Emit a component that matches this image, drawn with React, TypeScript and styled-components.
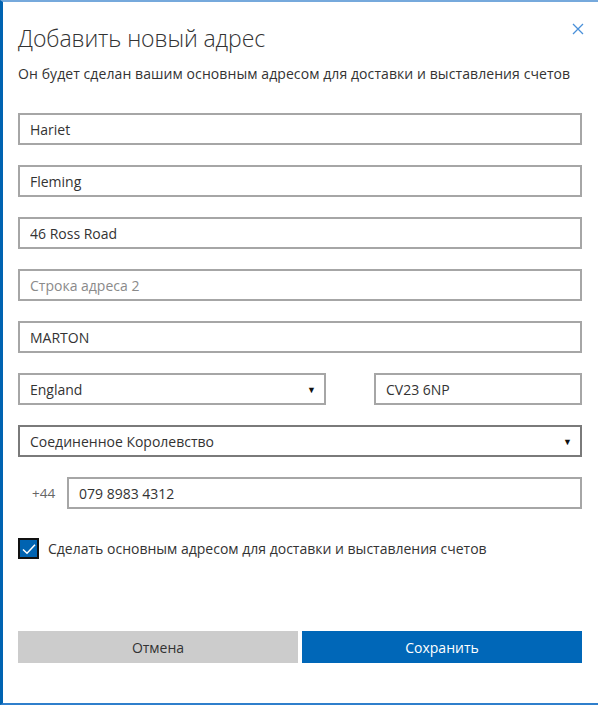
import styled, { createGlobalStyle } from "styled-components";

const Global = createGlobalStyle`
    html, body {
        margin: 0;
        padding: 0;
        background: #fff;
    }
    body {
        font-family: "Open Sans", "Noto Sans", sans-serif;
        color: #333;
    }
`

const fields = [
    { value: "Hariet" },
    { value: "Fleming" },
    { value: "46 Ross Road" },
    { value: "", placeholder: "Строка адреса 2" },
    { value: "MARTON" },
]

export default function App() {
    return <>
        <Global />
        <Dialog>
            <Header>
                <Title>Добавить новый адрес</Title>
                <Close aria-label="close">
                    <svg width="12" height="12" viewBox="0 0 12 12">
                        <path d="M1 1 L11 11 M11 1 L1 11" stroke="#4a90d9" strokeWidth="1.3" fill="none" />
                    </svg>
                </Close>
            </Header>
            <Subtitle>Он будет сделан вашим основным адресом для доставки и выставления счетов</Subtitle>

            <Form>
                {fields.map((f, idx) => <Field key={idx}>
                    <Input defaultValue={f.value} placeholder={f.placeholder} />
                </Field>)}

                <Row>
                    <Select $width="308px">
                        <span>England</span>
                        <Arrow>▼</Arrow>
                    </Select>
                    <Input $width="208px" defaultValue="CV23 6NP" />
                </Row>

                <Select $dark>
                    <span>Соединенное Королевство</span>
                    <Arrow>▼</Arrow>
                </Select>

                <PhoneRow>
                    <Prefix>+44</Prefix>
                    <Input defaultValue="079 8983 4312" />
                </PhoneRow>

                <CheckRow>
                    <Check>
                        <svg width="16" height="16" viewBox="0 0 16 16">
                            <path d="M2 8.5 L6 12.2 L14 3.8" stroke="#fff" strokeWidth="1.5" fill="none" />
                        </svg>
                    </Check>
                    <span>Сделать основным адресом для доставки и выставления счетов</span>
                </CheckRow>
            </Form>

            <Actions>
                <Button>Отмена</Button>
                <Button $primary>Сохранить</Button>
            </Actions>
        </Dialog>
    </>
}

const Dialog = styled.div`
    box-sizing: border-box;
    height: 705px;
    border-left: 3px solid #0063b1;
    border-top: 2px solid #76a9dc;
    border-bottom: 2px solid #2f7fcc;
    padding: 0 16px 0 15px;
    display: flex;
    flex-direction: column;
`

const Header = styled.div`
    display: flex;
    justify-content: space-between;
    align-items: flex-start;
    padding-top: 18px;
`

const Title = styled.h1`
    margin: 0;
    font-size: 23px;
    font-weight: 300;
    line-height: 36px;
    color: #333;
    letter-spacing: -0.1px;
`

const Close = styled.div`
    margin-top: 1px;
    margin-right: -4px;
    width: 16px;
    height: 16px;
    display: flex;
    align-items: center;
    justify-content: center;
`

const Subtitle = styled.p`
    margin: 8px 0 0;
    font-size: 14px;
    line-height: 20px;
    color: #333;
    letter-spacing: 0.08px;
    white-space: nowrap;
`

const Form = styled.div`
    display: flex;
    flex-direction: column;
    gap: 20px;
    margin-top: 29px;
`

const Field = styled.div`
    display: flex;
`

const Input = styled.input<{ $width?: string }>`
    box-sizing: border-box;
    width: ${p => p.$width ?? "100%"};
    height: 32px;
    border: 2px solid #a6a6a6;
    padding: 0 10px;
    font-family: "Open Sans", "Noto Sans", sans-serif;
    font-size: 14px;
    color: #333;
    background: #fff;
    outline: none;
    border-radius: 0;
    &::placeholder {
        color: #8a8a8a;
    }
`

const Row = styled.div`
    display: flex;
    justify-content: space-between;
`

const Select = styled.div<{ $width?: string, $dark?: boolean }>`
    box-sizing: border-box;
    width: ${p => p.$width ?? "100%"};
    height: 32px;
    border: 2px solid ${p => p.$dark ? "#7a7a7a" : "#a6a6a6"};
    padding: 0 8px 0 10px;
    display: flex;
    align-items: center;
    justify-content: space-between;
    font-size: 14px;
    color: #333;
`

const Arrow = styled.span`
    font-size: 9px;
    color: #111;
`

const PhoneRow = styled.div`
    display: flex;
    align-items: center;
`

const Prefix = styled.span`
    width: 49px;
    flex: none;
    padding-left: 14px;
    box-sizing: border-box;
    font-size: 13.5px;
    color: #666;
`

const CheckRow = styled.label`
    display: flex;
    align-items: center;
    gap: 9px;
    margin-top: 9px;
    font-size: 14px;
    color: #333;
    letter-spacing: 0;
`

const Check = styled.span`
    box-sizing: border-box;
    width: 21px;
    height: 21px;
    background: #0063b1;
    border: 2px solid #111;
    display: flex;
    align-items: center;
    justify-content: center;
`

const Actions = styled.div`
    display: grid;
    grid-template-columns: 1fr 1fr;
    gap: 4px;
    margin-top: 72px;
`

const Button = styled.button<{ $primary?: boolean }>`
    height: 32px;
    border: none;
    border-radius: 0;
    font-family: "Open Sans", "Noto Sans", sans-serif;
    font-size: 14px;
    background: ${p => p.$primary ? "#0067b8" : "#cccccc"};
    color: ${p => p.$primary ? "#fff" : "#333"};
`
